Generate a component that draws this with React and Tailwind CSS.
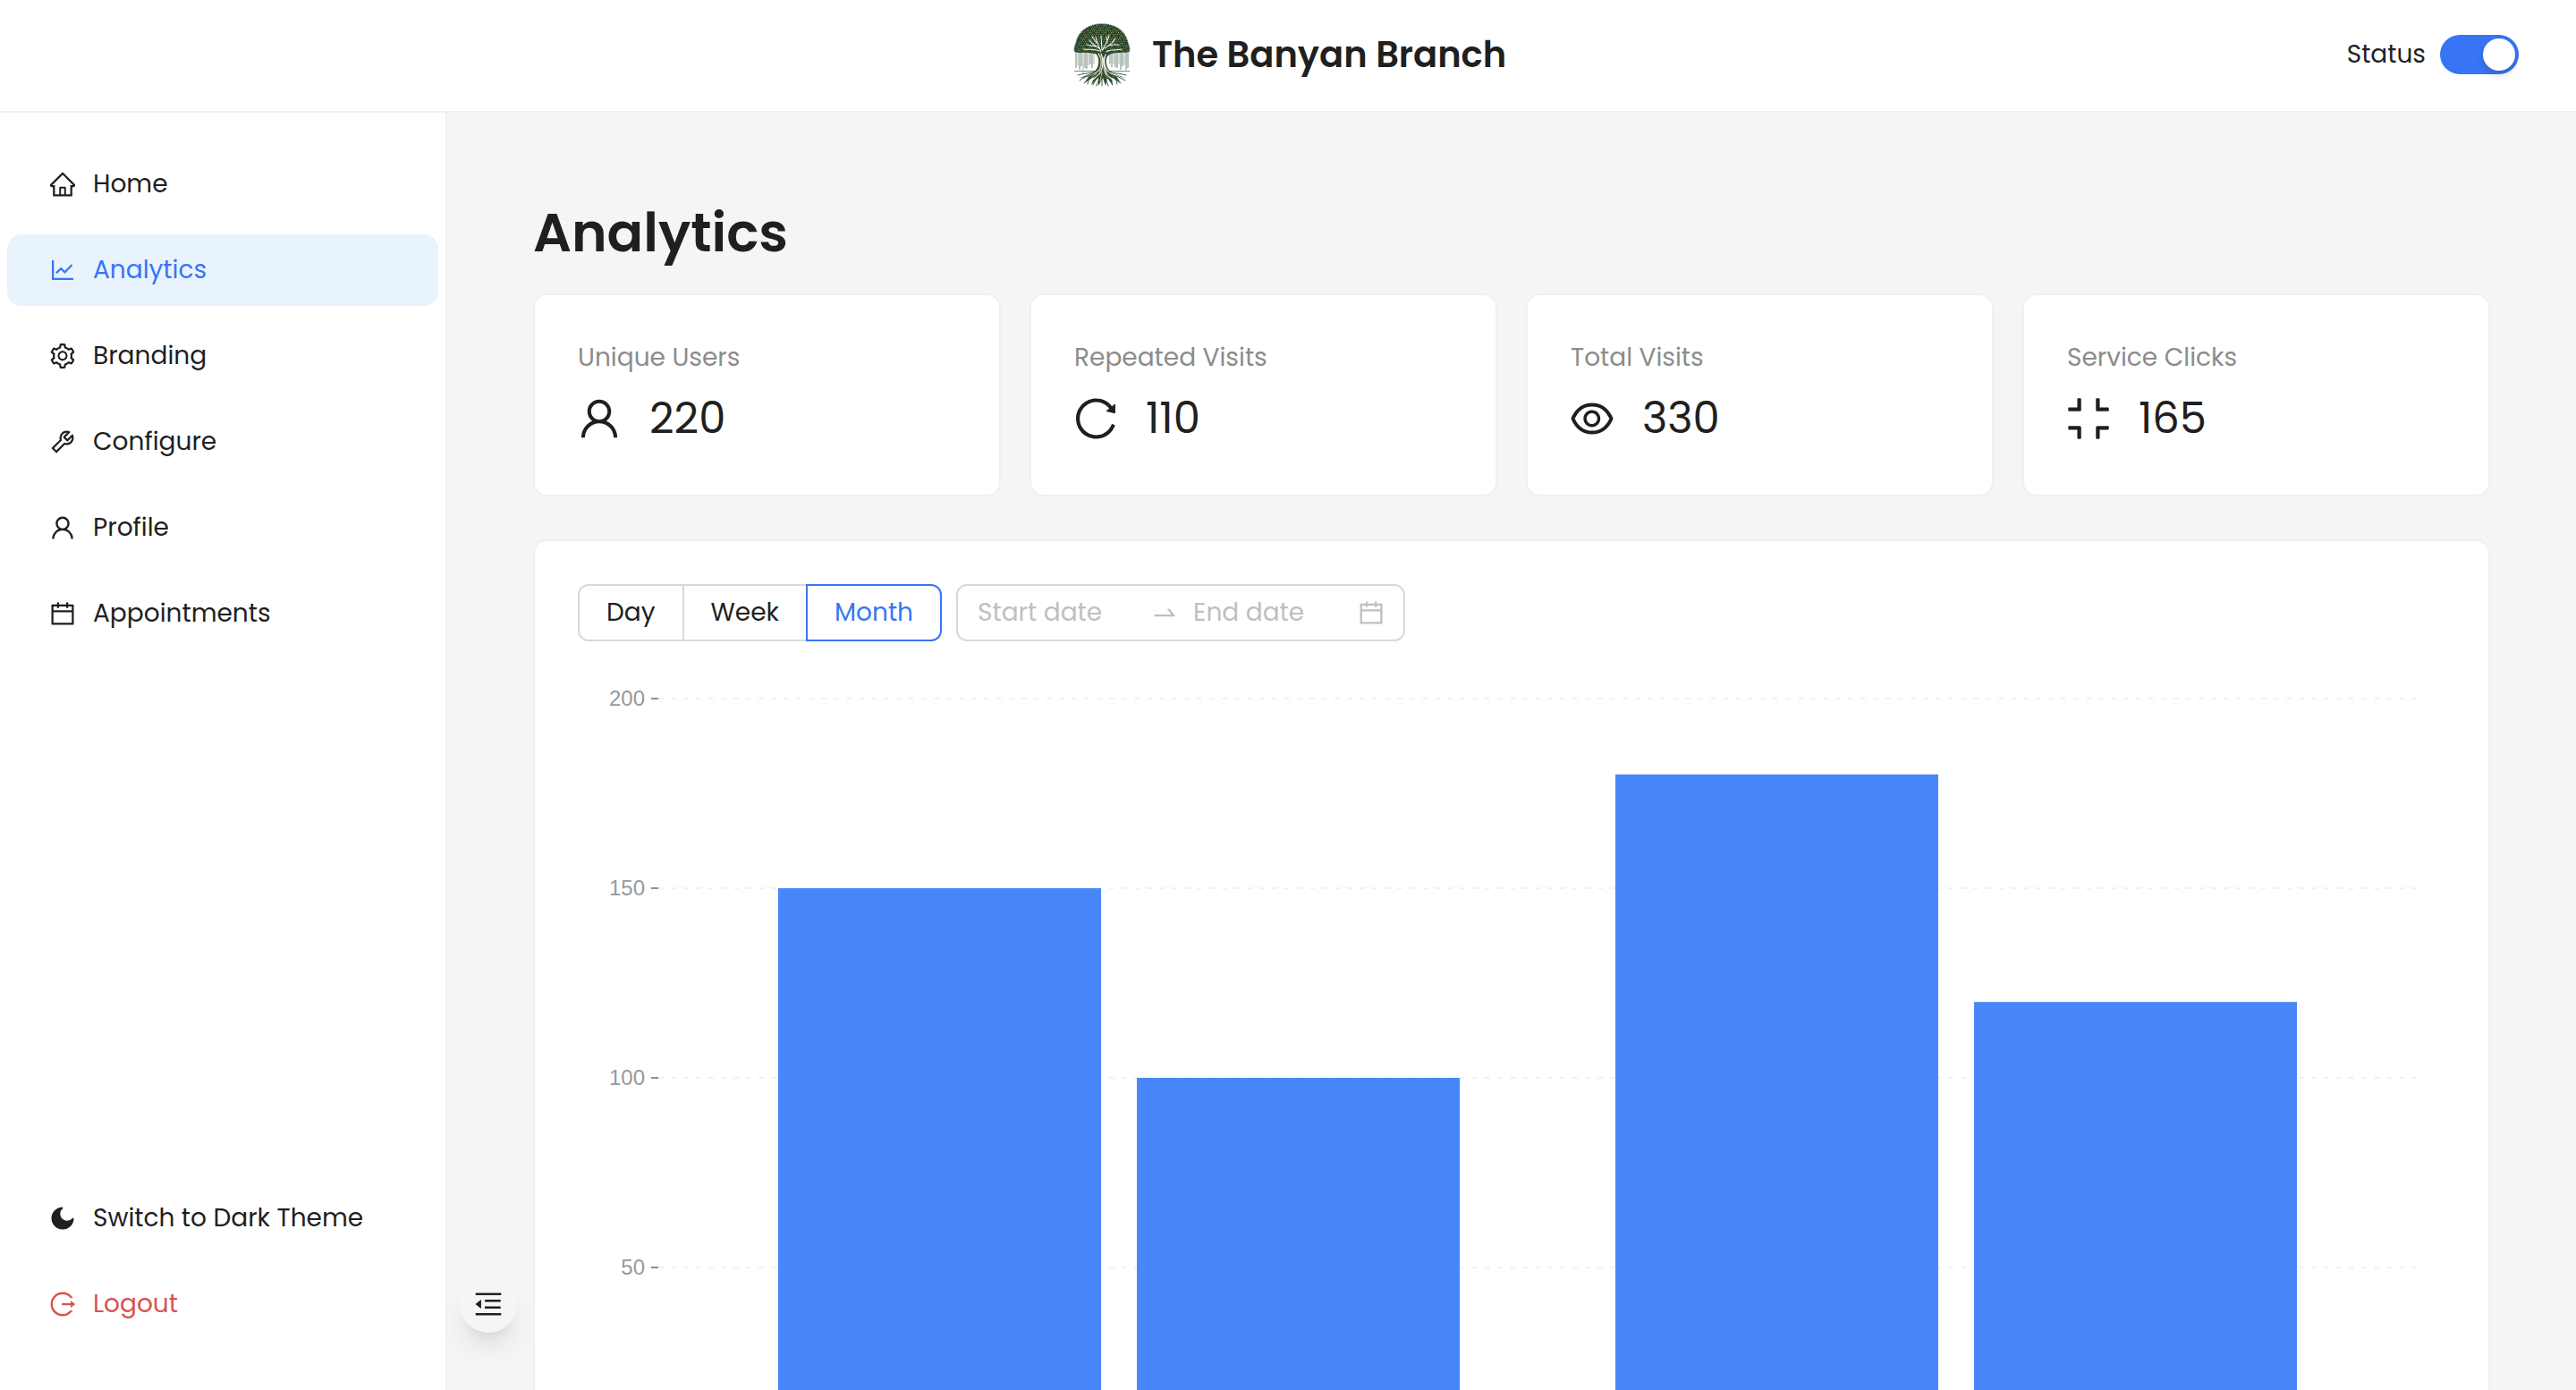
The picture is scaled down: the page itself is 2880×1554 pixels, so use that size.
import { useState } from "react";
import {
  AiFillMoon,
  AiOutlineCalendar,
  AiOutlineCompress,
  AiOutlineEye,
  AiOutlineHome,
  AiOutlineLineChart,
  AiOutlineLogout,
  AiOutlineMenuFold,
  AiOutlineReload,
  AiOutlineSetting,
  AiOutlineSwapRight,
  AiOutlineTool,
  AiOutlineUser,
} from "react-icons/ai";

const NAV = [
  { label: "Home", icon: AiOutlineHome },
  { label: "Analytics", icon: AiOutlineLineChart },
  { label: "Branding", icon: AiOutlineSetting },
  { label: "Configure", icon: AiOutlineTool },
  { label: "Profile", icon: AiOutlineUser },
  { label: "Appointments", icon: AiOutlineCalendar },
];

const STATS = [
  { label: "Unique Users", value: 220, icon: AiOutlineUser },
  { label: "Repeated Visits", value: 110, icon: AiOutlineReload },
  { label: "Total Visits", value: 330, icon: AiOutlineEye },
  { label: "Service Clicks", value: 165, icon: AiOutlineCompress },
];

const RANGES = ["Day", "Week", "Month"];

const GROUPS = [
  [150, 100],
  [180, 120],
];

// Crops the empty margin that the icon set leaves round each drawing.
const ICON_BOX = "64 64 896 896";

// Leaf flecks scattered over the dome of the canopy.
const FLECKS = [];
for (let row = 0; row < 15; row++) {
  for (let col = 0; col < 30; col++) {
    const x = col * 2 + (row % 2) + 1;
    const y = row * 2 + 2;
    const dx = (x - 31) / 29;
    const dy = (y - 31) / 30;
    const pick = (row * 7 + col * 5 + row * col) % 4;
    if (dx * dx + dy * dy < 1) {
      FLECKS.push({ x, y, color: ["#a8935a", "#7f7d45", "#12301f", "#56683f"][pick] });
    }
  }
}

const AERIAL_ROOTS = [
  [2, 50], [4, 47], [6, 52], [8, 48], [10, 56], [12, 50], [14, 51], [16, 47], [18, 46], [20, 50], [22, 45],
  [40, 45], [42, 49], [44, 46], [46, 49], [48, 50], [50, 46], [52, 52], [54, 48], [56, 47], [58, 52], [60, 50],
];

function TreeLogo() {
  return (
    <svg viewBox="-5 -1 72 72" className="size-18" role="img" aria-label="Banyan tree">
      <g strokeWidth="0.8">
        {AERIAL_ROOTS.map(([x, end], i) => (
          <path key={x} d={`M${x} 31V${end}`} stroke={i % 3 === 1 ? "#9aa39c" : "#4b6a57"} />
        ))}
      </g>
      <path
        d="M1 32C-1 28 2 24 3 19C6 9 16 1 31 1C46 1 56 9 59 19C60 24 63 28 61 32C56 34 52 31 46 33L38 34H24L16 33C11 32 6 34 1 32Z"
        fill="#2b4a30"
      />
      <path
        d="M1 32C-1 28 2 24 3 19C6 9 16 1 31 1C46 1 56 9 59 19C60 24 63 28 61 32"
        fill="none"
        stroke="#2b4a30"
        strokeWidth="1.6"
        strokeDasharray="1 0.8"
      />
      {FLECKS.map(({ x, y, color }) => (
        <rect key={`${x}-${y}`} x={x} y={y} width="1" height="1" fill={color} />
      ))}
      <path d="M0 53.500H26M37 53.500H62" stroke="#5d6b60" strokeWidth="0.8" />
      <g fill="none" stroke="#f3f0e6" strokeLinecap="round">
        <path d="M31 36C30 29 26 26 24 15M28 28C24 25 21 25 17 19M25 22L20 15M24 26L14 24M31 30L30 14M32 30C33 24 38 22 39 13M34 28C38 25 42 24 46 17M38 25L44 24L50 24M37 21L36 15M28 31C22 28 15 30 10 29M36 32C42 28 48 31 53 29" strokeWidth="1.1" />
      </g>
      <path
        d="M9 34C14 32 20 32 25 35C28 39 28 46 25 51C22 56 14 58 6 61L16 60L11 67L22 60L19 69L27 61L27 70L32 61L35 70L37 61L43 69L42 60L52 67L47 59L57 61C49 58 41 56 38 51C35 46 35 39 38 36C43 32 49 33 54 33C48 30 41 31 36 33L32 31L28 33C22 29 14 31 9 34Z"
        fill="#2f4d36"
      />
      <g fill="none" stroke="#f6f1e3" strokeLinecap="round" strokeWidth="1.2">
        <path d="M27 34C31 40 31 47 28 52C24 57 16 58 10 62M30 34C33 42 32 49 30 54C27 59 22 61 18 66" />
        <path d="M35 35C32 42 34 49 37 53C41 57 48 58 54 62M33 38C32 46 34 52 36 56C38 60 43 62 46 66" />
      </g>
      <g fill="none" stroke="#c7b585" strokeLinecap="round" strokeWidth="1.2">
        <path d="M29 36C31 42 30 49 28 54M33 48C33 54 35 58 38 62M31 55L29 65M25 56L20 60M41 57L46 59" />
      </g>
      <g fill="none" stroke="#28503a" strokeLinecap="round" strokeWidth="0.9">
        <path d="M24 54C18 56 10 56 4 58M22 57C15 59 9 61 6 64M24 58C18 61 14 64 11 67M26 59L21 69M29 59L25 70M31 59V70M34 59L38 70M36 59L43 69M38 58C44 61 48 64 52 67M40 57C47 59 53 61 57 64M38 54C44 56 52 56 58 58M17 60L15 68M46 60L48 68" />
      </g>
    </svg>
  );
}

function NavItem({ icon: Icon, label, tone }) {
  return (
    <li>
      <a href="#" className={`flex h-20 items-center gap-5 rounded-2xl px-12 ${tone}`}>
        <Icon viewBox={ICON_BOX} className="size-7 shrink-0" />
        <span>{label}</span>
      </a>
    </li>
  );
}

function VisitsChart() {
  const yFor = (value) => 888 - (value * 212) / 50;
  return (
    <svg viewBox="0 0 2088 960" className="mt-6 w-full" role="img" aria-label="Visits per month">
      {[200, 150, 100, 50].map((value) => (
        <g key={value}>
          <path d={`M90 ${yFor(value)}H2056`} stroke="#f2f2f2" strokeWidth="2" strokeDasharray="6 8" />
          <path d={`M82 ${yFor(value)}H90`} stroke="#8f9092" strokeWidth="2" />
          <text
            x="75"
            y={yFor(value) + 8}
            textAnchor="end"
            className="fill-[#97989b] font-['Liberation_Sans',Arial,sans-serif] text-[24px]"
          >
            {value}
          </text>
        </g>
      ))}
      {GROUPS.map((group, g) =>
        group.map((value, i) => (
          <rect
            key={`${g}-${i}`}
            x={224 + g * 936 + i * 401}
            y={yFor(value)}
            width="361"
            height={888 - yFor(value)}
            fill="#4887fa"
          />
        )),
      )}
    </svg>
  );
}

export default function App() {
  const [online, setOnline] = useState(true);
  const [range, setRange] = useState("Month");

  return (
    <div className="flex h-screen flex-col overflow-hidden bg-[#f5f5f5] font-['Poppins','Inter',sans-serif] text-[28px] leading-[44px] text-[#1f1f1f]">
      <header className="grid shrink-0 grid-cols-[1fr_auto_1fr] items-center border-b-2 border-[#f0f0f0] bg-white px-16 pt-[25px] pb-[27px]">
        <div />
        <div className="flex items-center gap-5">
          <TreeLogo />
          <span className="text-[40px] font-semibold">The Banyan Branch</span>
        </div>
        <label className="flex items-center gap-4 justify-self-end">
          <span>Status</span>
          <input
            type="checkbox"
            role="switch"
            checked={online}
            onChange={(e) => setOnline(e.target.checked)}
            className="h-11 w-22 appearance-none rounded-full bg-[#bfbfbf] p-1 before:block before:size-9 before:rounded-full before:bg-white before:shadow-[0_4px_8px_rgba(0,35,11,0.2)] checked:bg-[#3875f6] checked:before:ml-auto"
          />
        </label>
      </header>

      <div className="flex min-h-0 flex-1">
        <nav className="flex w-[500px] shrink-0 flex-col justify-between border-r-2 border-[#f0f0f0] bg-white px-2 pt-10 pb-14">
          <ul className="flex flex-col gap-4">
            {NAV.map((item) => (
              <NavItem
                key={item.label}
                {...item}
                tone={item.label === "Analytics" ? "bg-[#e8f3fe] text-[#3875f6]" : ""}
              />
            ))}
          </ul>
          <ul className="flex flex-col gap-4">
            <NavItem icon={AiFillMoon} label="Switch to Dark Theme" tone="" />
            <NavItem icon={AiOutlineLogout} label="Logout" tone="text-[#d9534f]" />
          </ul>
        </nav>

        <main className="relative min-w-0 flex-1 overflow-hidden p-24">
          <h1 className="mb-[30px] text-[60px] leading-[76px] font-semibold">Analytics</h1>

          <section className="grid grid-cols-4 gap-8">
            {STATS.map(({ label, value, icon: Icon }) => (
              <div key={label} className="rounded-2xl border-2 border-[#f0f0f0] bg-white p-12">
                <div className="mb-2 text-[#8c8c8c]">{label}</div>
                <div className="flex items-center gap-8 text-[48px] leading-[75px]">
                  <Icon viewBox={ICON_BOX} className="size-12" />
                  <span>{value}</span>
                </div>
              </div>
            ))}
          </section>

          <section className="mt-12 rounded-2xl border-2 border-[#f0f0f0] bg-white p-12">
            <div className="flex gap-4">
              <div className="flex" role="group" aria-label="Range">
                {RANGES.map((name) => (
                  <button
                    key={name}
                    type="button"
                    aria-pressed={range === name}
                    onClick={() => setRange(name)}
                    className={`-ml-0.5 h-16 border-2 px-[30px] first:ml-0 first:rounded-l-xl last:rounded-r-xl ${
                      range === name ? "z-10 border-[#3875f6] text-[#3875f6]" : "border-[#d9d9d9]"
                    }`}
                  >
                    {name}
                  </button>
                ))}
              </div>
              <div className="flex h-16 w-[502px] items-center rounded-xl border-2 border-[#d9d9d9] px-[22px] text-[#bfbfbf]">
                <input
                  aria-label="Start date"
                  placeholder="Start date"
                  className="w-0 flex-1 placeholder:text-[#bfbfbf]"
                />
                <AiOutlineSwapRight className="mx-4 size-8 shrink-0" />
                <input
                  aria-label="End date"
                  placeholder="End date"
                  className="w-0 flex-1 placeholder:text-[#bfbfbf]"
                />
                <AiOutlineCalendar viewBox={ICON_BOX} className="ml-2 size-7 shrink-0" />
              </div>
            </div>
            <VisitsChart />
          </section>

          <button
            type="button"
            aria-label="Collapse menu"
            className="absolute bottom-16 left-3.5 flex size-16 items-center justify-center rounded-full bg-[#f5f5f5] shadow-[0_20px_30px_-6px_rgba(0,0,0,0.1),0_8px_12px_-8px_rgba(0,0,0,0.1)]"
          >
            <AiOutlineMenuFold viewBox={ICON_BOX} className="size-8" />
          </button>
        </main>
      </div>
    </div>
  );
}
